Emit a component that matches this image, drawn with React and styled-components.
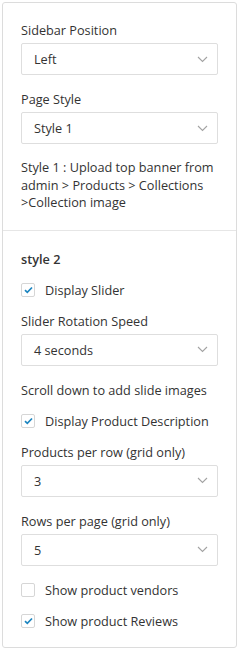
import React from 'react';
import styled, { createGlobalStyle } from 'styled-components';

const GlobalStyle = createGlobalStyle`
  body {
    margin: 2px;
    background: #fff;
    font-family: "Open Sans", "Noto Sans", sans-serif;
    color: #333;
  }
`;

const Card = styled.div`
  width: 233px;
  border: 1px solid #dcdcdc;
  border-radius: 3px;
  background: #fff;
`;

const Section = styled.div`
  display: flex;
  flex-direction: column;
  padding: ${p => (p.$first ? '18px 18px 18px' : '19px 18px 17px')};
  border-top: ${p => (p.$first ? 'none' : '1px solid #e6e6e6')};
`;

const Label = styled.div`
  font-size: 12.7px;
  line-height: 18px;
  margin-bottom: ${p => (p.$tight ? '4px' : '0')};
  font-weight: ${p => (p.$bold ? 600 : 400)};
`;

const Note = styled.div`
  font-size: 12.7px;
  line-height: 17.5px;
  margin-top: 15px;
`;

const SelectBox = styled.div`
  display: flex;
  align-items: center;
  justify-content: space-between;
  height: 30px;
  border: 1px solid #dedede;
  border-radius: 2px;
  padding: 0 9px 0 12px;
  font-size: 12.7px;
  margin-bottom: ${p => p.$mb || '15px'};
`;

const Chevron = () => (
  <svg width="11" height="7" viewBox="0 0 11 7" fill="none">
    <path d="M1 1l4.5 4.5L10 1" stroke="#a3a3a3" strokeWidth="1.1" />
  </svg>
);

const CheckRow = styled.label`
  display: flex;
  align-items: center;
  gap: 10px;
  font-size: 12.7px;
  line-height: 18px;
  margin-bottom: ${p => (p.$last ? '0' : '13px')};
`;

const Box = styled.span`
  display: flex;
  align-items: center;
  justify-content: center;
  width: 12px;
  height: 12px;
  border: 1px solid #d6d6d6;
  border-radius: 2px;
  background: #fff;
`;

const Check = ({ on, children, last }) => (
  <CheckRow $last={last}>
    <Box>
      {on && (
        <svg width="9" height="8" viewBox="0 0 9 8">
          <path d="M1 4.2l2.3 2.2L8 1.5" stroke="#1e86c0" strokeWidth="1.7" fill="none" />
        </svg>
      )}
    </Box>
    {children}
  </CheckRow>
);

const Select = ({ value, mb }) => (
  <SelectBox $mb={mb}>
    <span>{value}</span>
    <Chevron />
  </SelectBox>
);

const Heading = styled(Label)`
  margin-bottom: 13px;
`;

export default function App() {
  return (
    <>
      <GlobalStyle />
      <Card>
        <Section $first>
          <Label $tight>Sidebar Position</Label>
          <Select value="Left" />
          <Label $tight>Page Style</Label>
          <Select value="Style 1" mb="0" />
          <Note>
            Style 1 : Upload top banner from admin &gt; Products &gt; Collections &gt;Collection image
          </Note>
        </Section>
        <Section>
          <Heading $bold>style 2</Heading>
          <Check on>Display Slider</Check>
          <Label $tight>Slider Rotation Speed</Label>
          <Select value="4 seconds" />
          <Heading>Scroll down to add slide images</Heading>
          <Check on>Display Product Description</Check>
          <Label $tight>Products per row (grid only)</Label>
          <Select value="3" />
          <Label $tight>Rows per page (grid only)</Label>
          <Select value="5" />
          <Check>Show product vendors</Check>
          <Check on last>Show product Reviews</Check>
        </Section>
      </Card>
    </>
  );
}
